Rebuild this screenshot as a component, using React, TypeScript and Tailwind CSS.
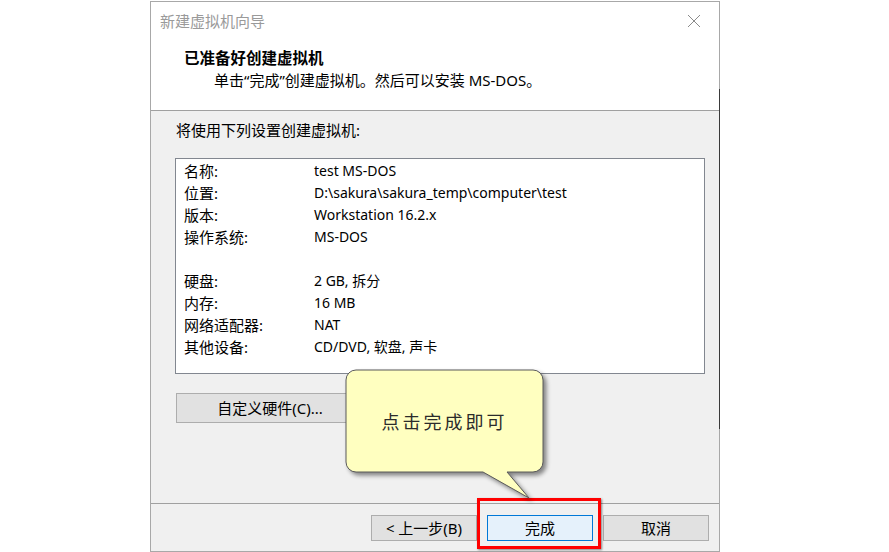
import React from "react";

const rows: [string, string][] = [
  ["名称:", "test MS-DOS"],
  ["位置:", "D:\\sakura\\sakura_temp\\computer\\test"],
  ["版本:", "Workstation 16.2.x"],
  ["操作系统:", "MS-DOS"],
  ["", ""],
  ["硬盘:", "2 GB, 拆分"],
  ["内存:", "16 MB"],
  ["网络适配器:", "NAT"],
  ["其他设备:", "CD/DVD, 软盘, 声卡"],
];

export default function App() {
  return (
    <div
      className="relative w-[889px] h-[552px] bg-white overflow-hidden text-black"
      style={{ fontFamily: "'Noto Sans', 'Noto Sans CJK SC', sans-serif" }}
    >
      {/* window */}
      <div className="relative ml-[150px] mt-[1px] w-[570px] h-[551px] border border-[#a8a8a8] flex flex-col bg-[#f0f0f0]">
        {/* header */}
        <div className="h-[109px] bg-white border-b border-[#a0a0a0] flex flex-col">
          <div className="flex items-center justify-between h-[38px] pl-[9px] pr-[14px]">
            <span className="text-[15px] text-[#9a9a9a] leading-none">新建虚拟机向导</span>
            <svg width="14" height="14" viewBox="0 0 14 14" className="mr-[4px]">
              <path d="M1 1 L13 13 M13 1 L1 13" stroke="#8a8a8a" strokeWidth="1" />
            </svg>
          </div>
          <div className="pl-[33px] mt-[7px] text-[15.5px] font-bold leading-[22px]">已准备好创建虚拟机</div>
          <div className="pl-[63px] text-[15px] leading-[22px]">单击“完成”创建虚拟机。然后可以安装 MS-DOS。</div>
        </div>

        {/* body */}
        <div className="flex-1 flex flex-col pl-[24px] pr-[14px]">
          <div className="mt-[9px] ml-[1px] text-[15px] leading-[20px]">将使用下列设置创建虚拟机:</div>
          <div className="mt-[18px] h-[216px] bg-white border border-[#828790] pt-[1px] pl-[8px]">
            {rows.map(([k, v], i) => (
              <div key={i} className="grid grid-cols-[130px_1fr] h-[22px] items-center leading-[22px]">
                <span className="text-[15px]">{k}</span>
                <span className="text-[14px]">{v}</span>
              </div>
            ))}
          </div>
          <div className="mt-[19px] ml-[1px]">
            <button className="w-[188px] h-[30px] bg-[#e1e1e1] border border-[#adadad] text-[15px] flex items-center justify-center">
              自定义硬件(C)...
            </button>
          </div>
        </div>

        {/* footer */}
        <div className="h-[48px] border-t border-[#a0a0a0] flex items-start justify-end gap-[10px] pt-[11px] pr-[10px]">
          <button className="w-[106px] h-[26px] bg-[#e1e1e1] border border-[#adadad] text-[15px] flex items-center justify-center">
            &lt; 上一步(B)
          </button>
          <button className="w-[106px] h-[26px] bg-[#e5f1fb] border border-[#0078d7] text-[15px] flex items-center justify-center">
            完成
          </button>
          <button className="w-[106px] h-[26px] bg-[#e1e1e1] border border-[#adadad] text-[15px] flex items-center justify-center">
            取消
          </button>
        </div>

        {/* dark edge artifact */}
        <div className="absolute right-[-1px] top-[87px] w-[1px] h-[340px] bg-[#3a3a3a]" />
      </div>

      {/* red highlight */}
      <div className="absolute left-[477px] top-[498px] w-[124px] h-[51px] border-[3px] border-[#ff0000] shadow-[1px_1px_2px_rgba(0,0,0,0.45)]" />

      {/* callout */}
      <div className="absolute left-[340px] top-[364px] w-[212px] h-[140px]">
        <svg width="212" height="140" viewBox="0 0 212 140" className="absolute inset-0 drop-shadow-[3px_3px_2px_rgba(0,0,0,0.45)]">
          <path
            d="M16 6 H193 A10 10 0 0 1 203 16 V98 A10 10 0 0 1 193 108 H167 L189 134 L143 108 H16 A10 10 0 0 1 6 98 V16 A10 10 0 0 1 16 6 Z"
            fill="#ffffc0"
            stroke="#5a5a5a"
            strokeWidth="1"
          />
        </svg>
        <div className="absolute left-[6px] top-[6px] w-[197px] h-[102px] flex items-center justify-center">
          <span className="text-[18px] tracking-[3px] text-[#2b2b2b] leading-none" style={{ fontFamily: "'Noto Sans CJK SC', sans-serif" }}>
            点击完成即可
          </span>
        </div>
      </div>
    </div>
  );
}
